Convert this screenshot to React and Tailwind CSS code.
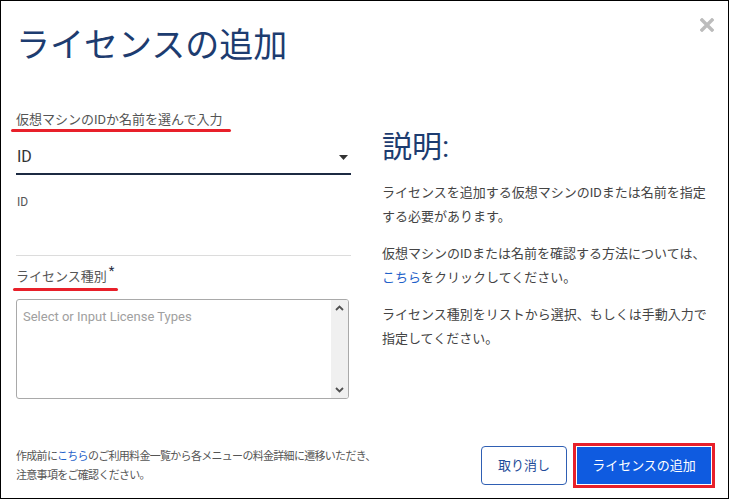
import React from 'react';

const font = { fontFamily: 'Roboto, "Noto Sans CJK JP", sans-serif' };

function Chevron({ up }) {
  return (
    <svg width="9" height="6" viewBox="0 0 9 6" className="block">
      <path d={up ? 'M1 5 L4.5 1.5 L8 5' : 'M1 1 L4.5 4.5 L8 1'} fill="none" stroke="#505050" strokeWidth="1.8" />
    </svg>
  );
}

export default function App() {
  return (
    <div className="w-[730px] h-[500px] bg-white" style={font}>
      <div className="w-[729px] h-[499px] border border-black flex flex-col px-[15px]">
        {/* ヘッダー */}
        <div className="flex items-start pt-[24px]">
          <h1 className="text-[34px] leading-[40px] text-[#1d3c70] font-normal">ライセンスの追加</h1>
          <button className="ml-auto mt-[-7px] mr-[-1px]">
            <svg width="14" height="14" viewBox="0 0 14 14" className="block">
              <path d="M2 2 L12 12 M12 2 L2 12" stroke="#bcbcbc" strokeWidth="3.4" strokeLinecap="square" />
            </svg>
          </button>
        </div>

        {/* 本文 */}
        <div className="flex items-start">
          <div className="w-[335px] mt-[46px]">
            <div className="text-[13px] leading-[18px] text-[#555]">仮想マシンのIDか名前を選んで入力</div>
            <div className="h-[3px] w-[220px] bg-[#e8202a] rounded-full ml-[-5px]" />

            <div className="mt-[9px] h-[34px] flex items-center justify-between border-b-2 border-[#1c2a42]">
              <span className="text-[16px] text-[#333] pl-[1px]">ID</span>
              <svg width="9" height="5" viewBox="0 0 9 5" className="mr-[3px] mt-[1px]">
                <path d="M0 0 L9 0 L4.5 5 Z" fill="#333" />
              </svg>
            </div>

            <div className="mt-[19px] text-[12px] leading-[16px] text-[#555] pl-[1px]">ID</div>
            <div className="h-[46px] border-b border-[#dcdcdc]" />

            <div className="mt-[12px] text-[13px] leading-[18px] text-[#555]">
              ライセンス種別<span className="text-[#1c2a42] text-[13px] relative top-[-6px] ml-[2px]">*</span>
            </div>
            <div className="h-[3px] w-[105px] bg-[#e8202a] rounded-full ml-[-3px] mt-[2px]" />

            <div className="mt-[8px] w-[333px] h-[100px] border border-[#a9a9a9] rounded-[3px] flex overflow-hidden">
              <div className="flex-1 pl-[6px] pt-[8px] text-[13px] leading-[18px] text-[#a0a0a0]">Select or Input License Types</div>
              <div className="w-[17px] bg-[#f0f0f0] flex flex-col items-center justify-between py-[5px]">
                <Chevron up />
                <Chevron />
              </div>
            </div>
          </div>

          <div className="w-[330px] ml-[31px] mt-[64px]">
            <h2 className="text-[30px] leading-[36px] text-[#1d3c70] font-normal">説明:</h2>
            <div className="mt-[16px] text-[13px] leading-[24px] text-[#444] flex flex-col gap-[13px]">
              <p>ライセンスを追加する仮想マシンのIDまたは名前を指定する必要があります。</p>
              <p>
                仮想マシンのIDまたは名前を確認する方法については、<br />
                <span className="text-[#1f62c9]">こちら</span>をクリックしてください。
              </p>
              <p>ライセンス種別をリストから選択、もしくは手動入力で指定してください。</p>
            </div>
          </div>
        </div>

        {/* フッター */}
        <div className="mt-auto pb-[10px] flex items-center">
          <p className="text-[11px] leading-[19px] text-[#555] whitespace-nowrap tracking-[-0.7px]">
            作成前に<span className="text-[#1f62c9]">こちら</span>のご利用料金一覧から各メニューの料金詳細に遷移いただき、<br />
            注意事項をご確認ください。
          </p>
          <div className="ml-auto flex items-center gap-[6px] mr-[-2px]">
            <button className="w-[86px] h-[39px] border border-[#2f5fb3] rounded-[4px] text-[13px] text-[#1f4c99] bg-white">取り消し</button>
            <div className="border-[3px] border-[#e8202a] p-[1px]">
              <button className="w-[134px] h-[37px] bg-[#0f5be0] text-white text-[13px] block">ライセンスの追加</button>
            </div>
          </div>
        </div>
      </div>
    </div>
  );
}
